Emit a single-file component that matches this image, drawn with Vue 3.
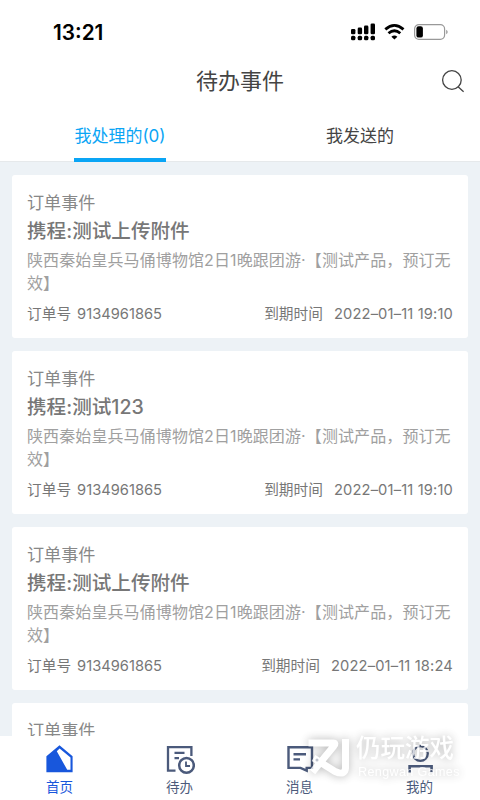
<template>
  <div class="page">
    <div class="status">
      <div class="time">13:21</div>
      <svg class="status-icons" width="100" height="24" viewBox="0 0 100 24">
        <g fill="#000">
          <rect x="1" y="9" width="4.4" height="5.2" rx="1.3" />
          <rect x="7.7" y="7.6" width="4.4" height="6.6" rx="1.3" />
          <rect x="14" y="5.6" width="4.4" height="8.6" rx="1.3" />
          <rect x="20.6" y="3.4" width="4.4" height="10.8" rx="1.3" />
          <rect x="1" y="15.8" width="4.4" height="4.5" rx="1.5" />
          <rect x="7.7" y="15.8" width="4.4" height="4.5" rx="1.5" />
          <rect x="14" y="15.8" width="4.4" height="4.5" rx="1.5" />
          <rect x="20.6" y="15.8" width="4.4" height="4.5" rx="1.5" />
          <path d="M41.4 16.7Q44.4 14.3 47.4 16.7L44.4 19.6Z" />
        </g>
        <path d="M35.3 9.4Q44.4 1.4 53.5 9.4M38.5 13.3Q44.4 8.2 50.3 13.3" fill="none" stroke="#000" stroke-width="2.8" />
        <rect x="64.6" y="4.6" width="30" height="14.8" rx="4.3" fill="none" stroke="#999" stroke-width="1.2" />
        <rect x="66.4" y="6.3" width="6.5" height="11.3" rx="2.2" fill="#000" />
        <path d="M96.2 9.7q1.5 .7 1.5 2.3t-1.5 2.3z" fill="#999" />
      </svg>
    </div>
    <div class="header">
      <div class="title">待办事件</div>
      <svg class="search" width="24" height="24" viewBox="0 0 24 24">
        <path d="M20.2 11a9.3 9.3 0 1 1-18.6 0a9.3 9.3 0 0 1 18.6 0M16.8 17.5L22.6 22.8" fill="none" stroke="#444" stroke-width="1.3" />
      </svg>
    </div>
    <div class="tabs">
      <div
        v-for="(item, i) in tabs"
        :key="item"
        class="tab"
        :class="{ actived: i === currentTab }"
        @click="currentTab = i"
      >
        <span class="tab-text">{{ item }}</span>
      </div>
    </div>

    <div class="list">
      <div class="card" v-for="(item, i) in list" :key="i">
        <div class="type">订单事件</div>
        <div class="name">{{ item.name }}</div>
        <div class="desc">陕西秦始皇兵马俑博物馆2日1晚跟团游·【测试产品，预订无效】</div>
        <div class="info">
          <div><span class="label">订单号</span><span class="num">9134961865</span></div>
          <div><span class="label end">到期时间</span><span class="num">{{ item.time }}</span></div>
        </div>
      </div>
      <div class="card">
        <div class="type">订单事件</div>
      </div>
    </div>

    <div class="nav">
      <div
        v-for="(item, i) in navs"
        :key="item.name"
        class="nav-item"
        :class="{ current: i === currentNav }"
        @click="currentNav = i"
      >
        <svg class="nav-icon" width="30" height="30" viewBox="0 0 30 30" fill="none" stroke="currentColor" stroke-width="2">
          <path
            v-if="item.icon === 'home'"
            d="M14.5 1.2L27.6 12.2V28.2H1.4V12.2ZM14.6 4.6L11.8 7.2L22.2 25.8H25.5V13.4Z"
            fill="currentColor"
            fill-rule="evenodd"
            stroke="none"
          />
          <g v-else-if="item.icon === 'todo'">
            <path d="M10.5 26.6H3V3.2H26.4V12M9.5 8.9H19.5M9.5 14.2H14" stroke-width="2.3" />
            <circle cx="21.5" cy="21.4" r="7.3" stroke-width="2.5" />
            <path d="M21 17.5V22H25" stroke-width="1.8" />
          </g>
          <path
            v-else-if="item.icon === 'message'"
            d="M3.5 3.2H27V23.9H21.7V26.6L15.5 23.9H3.5ZM8.5 10.2H21M8.5 15.4H15"
            stroke-width="2.4"
          />
          <g v-else>
            <circle cx="15.4" cy="9.5" r="7.4" stroke-width="2.3" />
            <path d="M4.6 28.4V22.2H26.6V28.4" stroke-width="2.6" />
          </g>
        </svg>
        <div class="nav-name">{{ item.name }}</div>
      </div>
    </div>

    <div class="watermark">
      <svg width="52" height="44" viewBox="0 0 52 44">
        <path d="M5.5 9H30Q33.5 9 30.5 12.5L9.5 38M10.5 24L32 37.5Q42 42 42.5 34V5" fill="none" stroke="#fff" stroke-width="7" stroke-linejoin="round" />
        <circle cx="14" cy="26" r="1.5" fill="#aab0bd" />
      </svg>
      <div class="mark-text">
        <div class="mark-cn">仍玩游戏</div>
        <div class="mark-en">Rengwan Games</div>
      </div>
    </div>
  </div>
</template>

<script setup>
import { ref } from "vue";

const currentTab = ref(0);
const currentNav = ref(0);

const tabs = ["我处理的(0)", "我发送的"];

const list = [
  { name: "携程:测试上传附件", time: "2022–01–11 19:10" },
  { name: "携程:测试123", time: "2022–01–11 19:10" },
  { name: "携程:测试上传附件", time: "2022–01–11 18:24" },
];

const navs = [
  { name: "首页", icon: "home" },
  { name: "待办", icon: "todo" },
  { name: "消息", icon: "message" },
  { name: "我的", icon: "mine" },
];
</script>

<style>
body {
  margin: 0;
}
</style>
<style scoped>
.page {
  position: relative;
  display: flex;
  flex-direction: column;
  width: 480px;
  height: 800px;
  overflow: hidden;
  background: #edf2f6;
  font-family: Inter, "Noto Sans CJK SC", sans-serif;
  color: #444;
  text-spacing-trim: space-all;
}

.status {
  display: flex;
  justify-content: space-between;
  align-items: center;
  flex: none;
  height: 64px;
  padding: 0 30px 0 53px;
  background: #fff;
}

.time {
  margin-top: 1px;
  font-size: 20.8px;
  line-height: 24px;
  font-weight: 600;
  color: #000;
}

.header {
  display: grid;
  grid-template-columns: 1fr auto 1fr;
  align-items: center;
  flex: none;
  height: 34px;
  padding: 0 15px;
  background: #fff;
}

.title {
  grid-column: 2;
  font-size: 22px;
  line-height: 34px;
}

.search {
  justify-self: end;
}

.tabs {
  display: flex;
  flex: none;
  height: 64px;
  background: #fff;
  border-bottom: 1px solid #e6e9eb;
  box-sizing: border-box;
}

.tab {
  flex: 1;
  text-align: center;
  font-size: 17px;
}

.tab-text {
  display: inline-block;
  height: 60px;
  line-height: 77px;
  border-bottom: 4px solid transparent;
}

.actived .tab-text {
  color: #0aa5f5;
  border-color: #0aa5f5;
}

.list {
  flex: 1;
  min-height: 0;
  padding: 13px 12px 0;
  overflow: hidden;
}

.card {
  height: 163px;
  box-sizing: border-box;
  margin-bottom: 13px;
  padding: 14px 15px 0;
  border-radius: 3px;
  background: #fff;
}

.type {
  font-size: 17.1px;
  line-height: 27px;
  color: #888;
}

.name {
  font-size: 19.6px;
  line-height: 31px;
  font-weight: 500;
  color: #777;
}

.desc {
  margin: 2px -4px 0 0;
  font-size: 16px;
  line-height: 23px;
  letter-spacing: 0.1px;
  color: #a0a0a0;
}

.info {
  display: flex;
  justify-content: space-between;
  margin-top: 9px;
  font-size: 14.7px;
  line-height: 20px;
  color: #777;
}

.label {
  margin-right: 6px;
}

.label.end {
  margin-right: 11px;
}

.num {
  font-weight: 400;
}

.end + .num {
  letter-spacing: 0.15px;
}

.nav {
  display: flex;
  flex: none;
  height: 64px;
  background: #fff;
}

.nav-item {
  flex: 1;
  display: flex;
  flex-direction: column;
  align-items: center;
  padding-top: 8px;
  color: #4b5a7b;
}

.nav-icon {
  flex: none;
}

.nav-name {
  margin-top: 3px;
  margin-right: 1px;
  font-size: 13.5px;
  line-height: 20px;
}

.current {
  color: #1857dc;
}

/* 水印 */
.watermark {
  position: absolute;
  left: 303px;
  top: 734px;
  display: flex;
  color: #fff;
  opacity: 0.75;
  filter: drop-shadow(0 0 5px rgba(0, 0, 0, 0.4));
}

.mark-text {
  margin-left: 1px;
}

.mark-cn {
  font-size: 24.5px;
  line-height: 29px;
  font-weight: 500;
}

.mark-en {
  margin-left: 2px;
  font-family: "Liberation Sans", sans-serif;
  font-size: 12.6px;
  line-height: 18px;
  letter-spacing: 0.35px;
}
</style>
